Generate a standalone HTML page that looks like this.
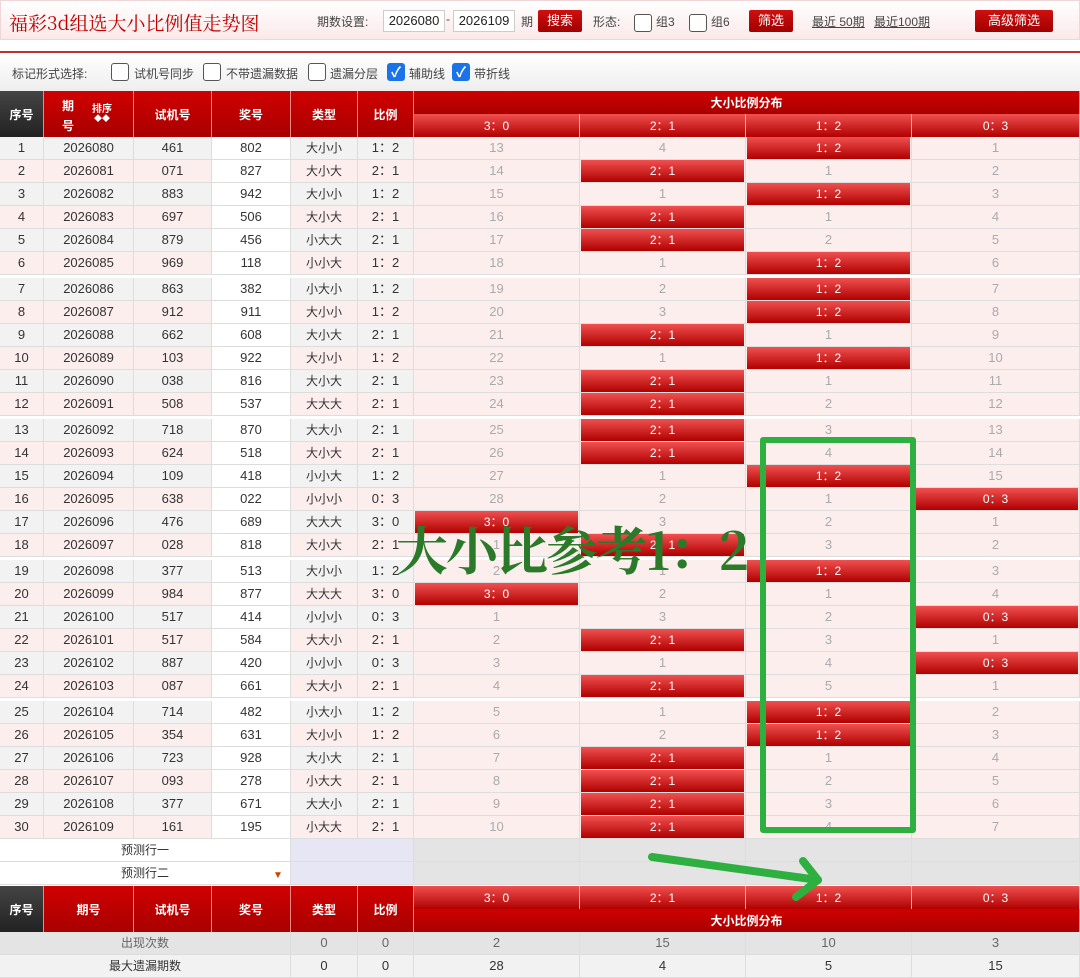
<!DOCTYPE html>
<html><head><meta charset="utf-8"><style>
*{box-sizing:border-box;margin:0;padding:0}
body{width:1080px;height:972px;overflow:hidden;background:#fff;font-family:"Liberation Sans","Noto Sans CJK SC",sans-serif;font-size:13px;color:#333;position:relative}
.top{position:absolute;left:0;top:0;width:1080px;height:40px;background:linear-gradient(#fff,#fbe9e9);border:1px solid #f0d6d6}
.title{position:absolute;left:8px;top:8px;font-size:19px;color:#c00000;font-family:"Noto Serif CJK SC","Noto Sans CJK SC",serif}
.t{position:absolute;top:12px;font-size:12px;color:#444}
.inp{position:absolute;top:9px;height:22px;width:62px;background:#fff;border:1px solid #ccc;font-size:13px;line-height:20px;text-align:center;color:#222}
.btn{position:absolute;top:9px;height:22px;background:linear-gradient(#d01010,#a00000);color:#fff;font-size:13px;line-height:22px;text-align:center;border-radius:2px}
.cb{position:absolute;width:18px;height:18px;border:1px solid #555;border-radius:3px;background:#fff}
.cbc{background:#1a73e8;border-color:#1a73e8;color:#fff;font-size:14px;line-height:16px;text-align:center;font-weight:bold}
.redline{position:absolute;left:0;top:51px;width:1080px;height:2px;background:#c03030}
.bar{position:absolute;left:0;top:53px;width:1080px;height:38px;background:linear-gradient(#fff,#eee)}
.bt{position:absolute;top:65px;font-size:12px;color:#444}
.hd{position:absolute;background:linear-gradient(#d00000,#a80000);color:#fff;font-size:12px;font-weight:bold;display:flex;align-items:center;justify-content:center;border-right:1px solid #e88}
.sub{position:absolute;background:linear-gradient(#f05050,#b00000);color:#fff;font-size:12px;display:flex;align-items:center;justify-content:center;border-right:1px solid #f0b0b0}
#rows{position:absolute;left:0;top:137px;width:1080px}
.r{display:flex;height:23px;border-bottom:1px solid #ddd}
.r.s{margin-top:3px}
.r>div{height:22px;line-height:22px;text-align:center;border-right:1px solid #ddd;font-size:13px;color:#333}
.g>div{background:#f2f2f2}.p>div{background:#fdeeee}
.r>div.w{background:#fff}
.r>div.d{background:#fdeeee;color:#aaa;width:166px;position:relative}
.r>div.d:last-child{width:168px}
.c1{width:44px}.c2{width:90px}.c3{width:78px}.c4{width:79px}.c5{width:67px;font-size:12px!important}.c6{width:56px}
.h{position:absolute;left:1px;right:1px;top:0;bottom:0;background:linear-gradient(#f05050,#b00000);color:#fff;font-size:12px}
.gl{position:absolute;background:#2db040}
</style></head><body>
<div class="top">
<div class="title">福彩3d组选大小比例值走势图</div>
<div class="t" style="left:316px">期数设置:</div>
<div class="inp" style="left:382px">2026080</div>
<div class="t" style="left:445px;top:11px">-</div>
<div class="inp" style="left:452px">2026109</div>
<div class="t" style="left:520px">期</div>
<div class="btn" style="left:537px;width:44px">搜索</div>
<div class="t" style="left:592px">形态:</div>
<div class="cb" style="left:633px;top:13px"></div><div class="t" style="left:655px">组3</div>
<div class="cb" style="left:688px;top:13px"></div><div class="t" style="left:710px">组6</div>
<div class="btn" style="left:748px;width:44px">筛选</div>
<div class="t" style="left:811px;text-decoration:underline">最近 50期</div>
<div class="t" style="left:873px;text-decoration:underline">最近100期</div>
<div class="btn" style="left:974px;width:78px">高级筛选</div>
</div>
<div class="redline"></div>
<div class="bar"></div>
<div class="bt" style="left:12px">标记形式选择:</div>
<div class="cb" style="left:111px;top:63px"></div><div class="bt" style="left:134px">试机号同步</div>
<div class="cb" style="left:203px;top:63px"></div><div class="bt" style="left:226px">不带遗漏数据</div>
<div class="cb" style="left:308px;top:63px"></div><div class="bt" style="left:330px">遗漏分层</div>
<div class="cb cbc" style="left:387px;top:63px">✓</div><div class="bt" style="left:409px">辅助线</div>
<div class="cb cbc" style="left:452px;top:63px">✓</div><div class="bt" style="left:474px">带折线</div>

<div class="hd" style="left:0;top:91px;width:44px;height:46px;background:linear-gradient(#444,#222)">序号</div>
<div class="hd" style="left:44px;top:91px;width:90px;height:46px"><span style="position:absolute;left:18px;top:6px">期</span><span style="position:absolute;left:18px;top:26px">号</span><span style="position:absolute;left:48px;top:9px;font-size:10px">排序</span><span style="position:absolute;left:50px;top:22px;font-size:8px">◆◆</span></div>
<div class="hd" style="left:134px;top:91px;width:78px;height:46px">试机号</div>
<div class="hd" style="left:212px;top:91px;width:79px;height:46px">奖号</div>
<div class="hd" style="left:291px;top:91px;width:67px;height:46px">类型</div>
<div class="hd" style="left:358px;top:91px;width:56px;height:46px">比例</div>
<div class="hd" style="left:414px;top:91px;width:666px;height:23px">大小比例分布</div>
<div class="sub" style="left:414px;top:114px;width:166px;height:23px">3：0</div>
<div class="sub" style="left:580px;top:114px;width:166px;height:23px">2：1</div>
<div class="sub" style="left:746px;top:114px;width:166px;height:23px">1：2</div>
<div class="sub" style="left:912px;top:114px;width:168px;height:23px">0：3</div>

<div id="rows">
<div class="r g"><div class="c1">1</div><div class="c2">2026080</div><div class="c3">461</div><div class="c4 w">802</div><div class="c5">大小小</div><div class="c6">1：2</div><div class="d">13</div><div class="d">4</div><div class="d"><span class="h">1：2</span></div><div class="d">1</div></div>
<div class="r p"><div class="c1">2</div><div class="c2">2026081</div><div class="c3">071</div><div class="c4 w">827</div><div class="c5">大小大</div><div class="c6">2：1</div><div class="d">14</div><div class="d"><span class="h">2：1</span></div><div class="d">1</div><div class="d">2</div></div>
<div class="r g"><div class="c1">3</div><div class="c2">2026082</div><div class="c3">883</div><div class="c4 w">942</div><div class="c5">大小小</div><div class="c6">1：2</div><div class="d">15</div><div class="d">1</div><div class="d"><span class="h">1：2</span></div><div class="d">3</div></div>
<div class="r p"><div class="c1">4</div><div class="c2">2026083</div><div class="c3">697</div><div class="c4 w">506</div><div class="c5">大小大</div><div class="c6">2：1</div><div class="d">16</div><div class="d"><span class="h">2：1</span></div><div class="d">1</div><div class="d">4</div></div>
<div class="r g"><div class="c1">5</div><div class="c2">2026084</div><div class="c3">879</div><div class="c4 w">456</div><div class="c5">小大大</div><div class="c6">2：1</div><div class="d">17</div><div class="d"><span class="h">2：1</span></div><div class="d">2</div><div class="d">5</div></div>
<div class="r p"><div class="c1">6</div><div class="c2">2026085</div><div class="c3">969</div><div class="c4 w">118</div><div class="c5">小小大</div><div class="c6">1：2</div><div class="d">18</div><div class="d">1</div><div class="d"><span class="h">1：2</span></div><div class="d">6</div></div>
<div class="r g s"><div class="c1">7</div><div class="c2">2026086</div><div class="c3">863</div><div class="c4 w">382</div><div class="c5">小大小</div><div class="c6">1：2</div><div class="d">19</div><div class="d">2</div><div class="d"><span class="h">1：2</span></div><div class="d">7</div></div>
<div class="r p"><div class="c1">8</div><div class="c2">2026087</div><div class="c3">912</div><div class="c4 w">911</div><div class="c5">大小小</div><div class="c6">1：2</div><div class="d">20</div><div class="d">3</div><div class="d"><span class="h">1：2</span></div><div class="d">8</div></div>
<div class="r g"><div class="c1">9</div><div class="c2">2026088</div><div class="c3">662</div><div class="c4 w">608</div><div class="c5">大小大</div><div class="c6">2：1</div><div class="d">21</div><div class="d"><span class="h">2：1</span></div><div class="d">1</div><div class="d">9</div></div>
<div class="r p"><div class="c1">10</div><div class="c2">2026089</div><div class="c3">103</div><div class="c4 w">922</div><div class="c5">大小小</div><div class="c6">1：2</div><div class="d">22</div><div class="d">1</div><div class="d"><span class="h">1：2</span></div><div class="d">10</div></div>
<div class="r g"><div class="c1">11</div><div class="c2">2026090</div><div class="c3">038</div><div class="c4 w">816</div><div class="c5">大小大</div><div class="c6">2：1</div><div class="d">23</div><div class="d"><span class="h">2：1</span></div><div class="d">1</div><div class="d">11</div></div>
<div class="r p"><div class="c1">12</div><div class="c2">2026091</div><div class="c3">508</div><div class="c4 w">537</div><div class="c5">大大大</div><div class="c6">2：1</div><div class="d">24</div><div class="d"><span class="h">2：1</span></div><div class="d">2</div><div class="d">12</div></div>
<div class="r g s"><div class="c1">13</div><div class="c2">2026092</div><div class="c3">718</div><div class="c4 w">870</div><div class="c5">大大小</div><div class="c6">2：1</div><div class="d">25</div><div class="d"><span class="h">2：1</span></div><div class="d">3</div><div class="d">13</div></div>
<div class="r p"><div class="c1">14</div><div class="c2">2026093</div><div class="c3">624</div><div class="c4 w">518</div><div class="c5">大小大</div><div class="c6">2：1</div><div class="d">26</div><div class="d"><span class="h">2：1</span></div><div class="d">4</div><div class="d">14</div></div>
<div class="r g"><div class="c1">15</div><div class="c2">2026094</div><div class="c3">109</div><div class="c4 w">418</div><div class="c5">小小大</div><div class="c6">1：2</div><div class="d">27</div><div class="d">1</div><div class="d"><span class="h">1：2</span></div><div class="d">15</div></div>
<div class="r p"><div class="c1">16</div><div class="c2">2026095</div><div class="c3">638</div><div class="c4 w">022</div><div class="c5">小小小</div><div class="c6">0：3</div><div class="d">28</div><div class="d">2</div><div class="d">1</div><div class="d"><span class="h">0：3</span></div></div>
<div class="r g"><div class="c1">17</div><div class="c2">2026096</div><div class="c3">476</div><div class="c4 w">689</div><div class="c5">大大大</div><div class="c6">3：0</div><div class="d"><span class="h">3：0</span></div><div class="d">3</div><div class="d">2</div><div class="d">1</div></div>
<div class="r p"><div class="c1">18</div><div class="c2">2026097</div><div class="c3">028</div><div class="c4 w">818</div><div class="c5">大小大</div><div class="c6">2：1</div><div class="d">1</div><div class="d"><span class="h">2：1</span></div><div class="d">3</div><div class="d">2</div></div>
<div class="r g s"><div class="c1">19</div><div class="c2">2026098</div><div class="c3">377</div><div class="c4 w">513</div><div class="c5">大小小</div><div class="c6">1：2</div><div class="d">2</div><div class="d">1</div><div class="d"><span class="h">1：2</span></div><div class="d">3</div></div>
<div class="r p"><div class="c1">20</div><div class="c2">2026099</div><div class="c3">984</div><div class="c4 w">877</div><div class="c5">大大大</div><div class="c6">3：0</div><div class="d"><span class="h">3：0</span></div><div class="d">2</div><div class="d">1</div><div class="d">4</div></div>
<div class="r g"><div class="c1">21</div><div class="c2">2026100</div><div class="c3">517</div><div class="c4 w">414</div><div class="c5">小小小</div><div class="c6">0：3</div><div class="d">1</div><div class="d">3</div><div class="d">2</div><div class="d"><span class="h">0：3</span></div></div>
<div class="r p"><div class="c1">22</div><div class="c2">2026101</div><div class="c3">517</div><div class="c4 w">584</div><div class="c5">大大小</div><div class="c6">2：1</div><div class="d">2</div><div class="d"><span class="h">2：1</span></div><div class="d">3</div><div class="d">1</div></div>
<div class="r g"><div class="c1">23</div><div class="c2">2026102</div><div class="c3">887</div><div class="c4 w">420</div><div class="c5">小小小</div><div class="c6">0：3</div><div class="d">3</div><div class="d">1</div><div class="d">4</div><div class="d"><span class="h">0：3</span></div></div>
<div class="r p"><div class="c1">24</div><div class="c2">2026103</div><div class="c3">087</div><div class="c4 w">661</div><div class="c5">大大小</div><div class="c6">2：1</div><div class="d">4</div><div class="d"><span class="h">2：1</span></div><div class="d">5</div><div class="d">1</div></div>
<div class="r g s"><div class="c1">25</div><div class="c2">2026104</div><div class="c3">714</div><div class="c4 w">482</div><div class="c5">小大小</div><div class="c6">1：2</div><div class="d">5</div><div class="d">1</div><div class="d"><span class="h">1：2</span></div><div class="d">2</div></div>
<div class="r p"><div class="c1">26</div><div class="c2">2026105</div><div class="c3">354</div><div class="c4 w">631</div><div class="c5">大小小</div><div class="c6">1：2</div><div class="d">6</div><div class="d">2</div><div class="d"><span class="h">1：2</span></div><div class="d">3</div></div>
<div class="r g"><div class="c1">27</div><div class="c2">2026106</div><div class="c3">723</div><div class="c4 w">928</div><div class="c5">大小大</div><div class="c6">2：1</div><div class="d">7</div><div class="d"><span class="h">2：1</span></div><div class="d">1</div><div class="d">4</div></div>
<div class="r p"><div class="c1">28</div><div class="c2">2026107</div><div class="c3">093</div><div class="c4 w">278</div><div class="c5">小大大</div><div class="c6">2：1</div><div class="d">8</div><div class="d"><span class="h">2：1</span></div><div class="d">2</div><div class="d">5</div></div>
<div class="r g"><div class="c1">29</div><div class="c2">2026108</div><div class="c3">377</div><div class="c4 w">671</div><div class="c5">大大小</div><div class="c6">2：1</div><div class="d">9</div><div class="d"><span class="h">2：1</span></div><div class="d">3</div><div class="d">6</div></div>
<div class="r p"><div class="c1">30</div><div class="c2">2026109</div><div class="c3">161</div><div class="c4 w">195</div><div class="c5">小大大</div><div class="c6">2：1</div><div class="d">10</div><div class="d"><span class="h">2：1</span></div><div class="d">4</div><div class="d">7</div></div>
<div class="r"><div class="w" style="width:291px;font-size:12px">预测行一</div><div style="width:123px;background:#e6e6f5"></div><div style="width:166px;background:#e4e4e4"></div><div style="width:166px;background:#e4e4e4"></div><div style="width:166px;background:#e4e4e4"></div><div style="width:168px;background:#e4e4e4"></div></div>
<div class="r"><div class="w" style="width:291px;font-size:12px;position:relative">预测行二<span style="position:absolute;left:273px;top:3px;color:#d04000;font-size:10px">▼</span></div><div style="width:123px;background:#e6e6f5"></div><div style="width:166px;background:#e4e4e4"></div><div style="width:166px;background:#e4e4e4"></div><div style="width:166px;background:#e4e4e4"></div><div style="width:168px;background:#e4e4e4"></div></div>
</div>

<div class="hd" style="left:0;top:886px;width:44px;height:46px;background:linear-gradient(#444,#222)">序号</div>
<div class="hd" style="left:44px;top:886px;width:90px;height:46px">期号</div>
<div class="hd" style="left:134px;top:886px;width:78px;height:46px">试机号</div>
<div class="hd" style="left:212px;top:886px;width:79px;height:46px">奖号</div>
<div class="hd" style="left:291px;top:886px;width:67px;height:46px">类型</div>
<div class="hd" style="left:358px;top:886px;width:56px;height:46px">比例</div>
<div class="sub" style="left:414px;top:886px;width:166px;height:23px">3：0</div>
<div class="sub" style="left:580px;top:886px;width:166px;height:23px">2：1</div>
<div class="sub" style="left:746px;top:886px;width:166px;height:23px">1：2</div>
<div class="sub" style="left:912px;top:886px;width:168px;height:23px">0：3</div>
<div class="hd" style="left:414px;top:909px;width:666px;height:23px">大小比例分布</div>
<div style="position:absolute;left:0;top:932px;width:1080px">
<div class="r" style="background:#e4e4e4"><div style="width:291px;color:#666;font-size:12px">出现次数</div><div style="width:67px;color:#666">0</div><div style="width:56px;color:#666">0</div><div style="width:166px;color:#666">2</div><div style="width:166px;color:#666">15</div><div style="width:166px;color:#666">10</div><div style="width:168px;color:#666">3</div></div>
<div class="r" style="background:#f2f2f2"><div style="width:291px;font-size:12px">最大遗漏期数</div><div style="width:67px">0</div><div style="width:56px">0</div><div style="width:166px">28</div><div style="width:166px">4</div><div style="width:166px">5</div><div style="width:168px">15</div></div>
</div>

<div style="position:absolute;left:760px;top:437px;width:156px;height:396px;border:6px solid #2db040;border-radius:3px"></div>
<div style="position:absolute;left:396px;top:516px;font-size:52px;font-weight:bold;color:#2a7a2a;font-family:'Noto Serif CJK SC','Noto Sans CJK SC',serif;white-space:nowrap;letter-spacing:-2px;line-height:64px">大小比参考1：2</div>
<svg style="position:absolute;left:0;top:0" width="1080" height="972"><g stroke="#2db040" stroke-width="8" stroke-linecap="round" fill="none"><line x1="652" y1="857" x2="818" y2="880"/><line x1="803" y1="861" x2="818" y2="880"/><line x1="796" y1="897" x2="818" y2="880"/></g></svg>
</body></html>
